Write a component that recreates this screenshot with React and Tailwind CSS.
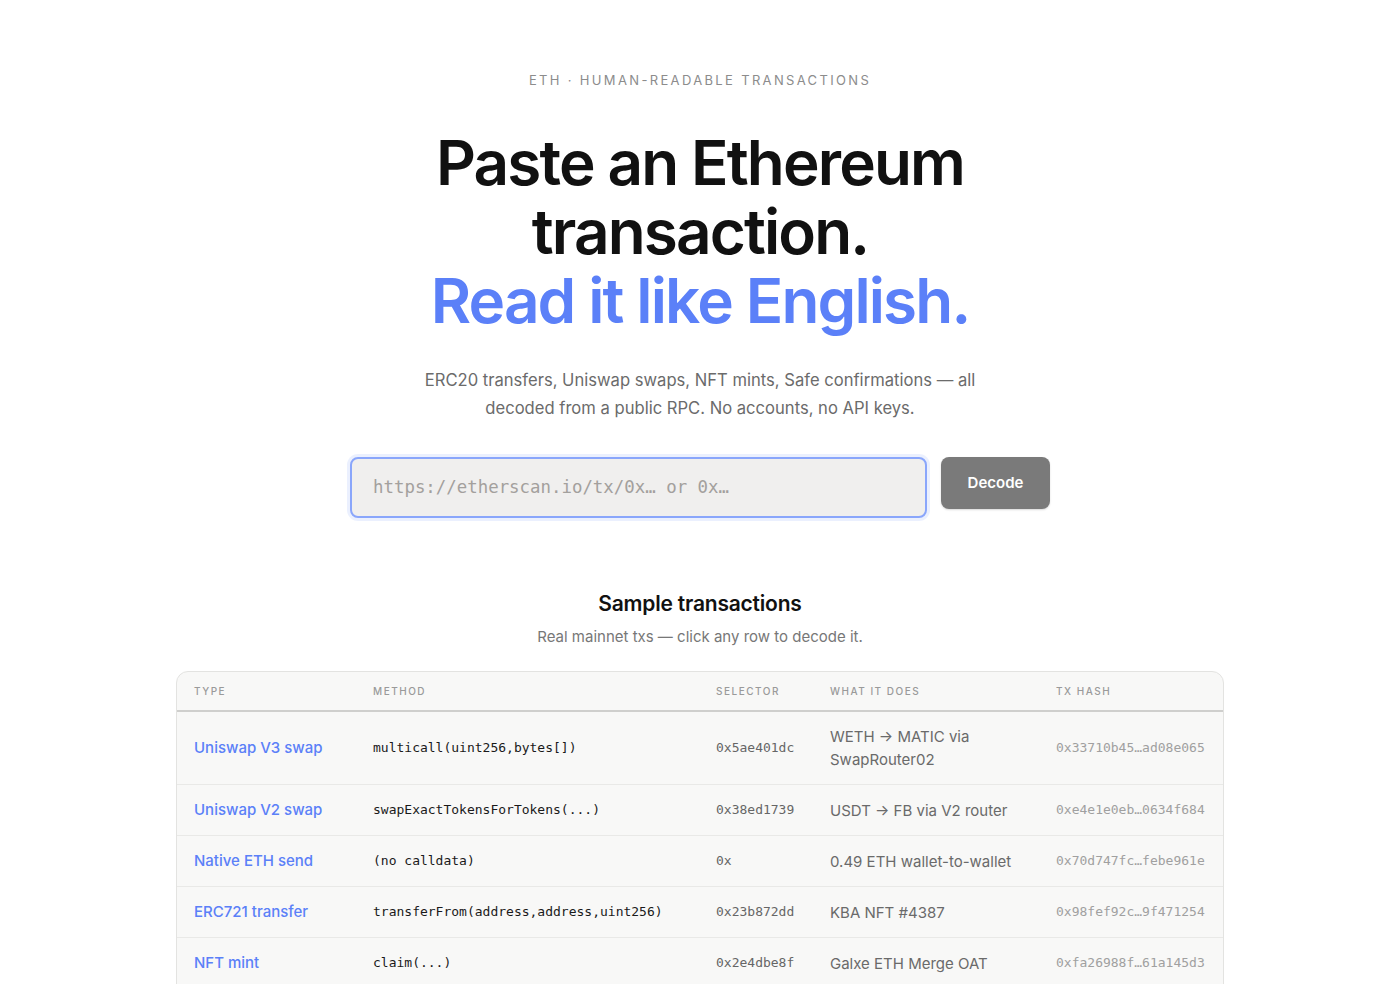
import React from "react";

const rows = [
  { type: "Uniswap V3 swap", method: "multicall(uint256,bytes[])", sel: "0x5ae401dc", what: "WETH → MATIC via SwapRouter02", hash: "0x33710b45…ad08e065" },
  { type: "Uniswap V2 swap", method: "swapExactTokensForTokens(...)", sel: "0x38ed1739", what: "USDT → FB via V2 router", hash: "0xe4e1e0eb…0634f684" },
  { type: "Native ETH send", method: "(no calldata)", sel: "0x", what: "0.49 ETH wallet-to-wallet", hash: "0x70d747fc…febe961e" },
  { type: "ERC721 transfer", method: "transferFrom(address,address,uint256)", sel: "0x23b872dd", what: "KBA NFT #4387", hash: "0x98fef92c…9f471254" },
  { type: "NFT mint", method: "claim(...)", sel: "0x2e4dbe8f", what: "Galxe ETH Merge OAT", hash: "0xfa26988f…61a145d3" },
];

const sans = { fontFamily: "Inter, 'Noto Sans', sans-serif" };
const mono = { fontFamily: "'DejaVu Sans Mono', monospace" };

export default function App() {
  return (
    <div className="min-h-[984px] bg-white flex flex-col items-center text-[#111]" style={sans}>
      <div className="pt-[70px] text-[13px] leading-[20px] tracking-[0.18em] text-[#8c8c8c] uppercase">
        ETH · Human-readable transactions
      </div>
      <h1 className="mt-[38px] flex flex-col items-center text-center text-[62px] font-semibold tracking-[-0.03em] text-[#111]">
        <span className="block leading-[69px]">Paste an Ethereum</span>
        <span className="block leading-[69px]">transaction.</span>
        <span className="block leading-[69px] text-[#5b80f8]">Read it like English.</span>
      </h1>
      <p className="mt-[31px] w-[570px] text-center text-[16.6px] leading-[28px] text-[#6b6b6b]">
        ERC20 transfers, Uniswap swaps, NFT mints, Safe confirmations — all decoded from a public RPC. No accounts, no API keys.
      </p>
      <div className="mt-[35px] flex items-start gap-[14px] w-[700px]">
        <div className="w-[577px] h-[61px] rounded-[8px] border-2 border-[#8aa6fb] bg-[#f0efee] shadow-[0_0_0_3px_rgba(91,128,248,0.12)] flex items-center px-[21px]">
          <span className="text-[17.4px] text-[#a3a09d]" style={mono}>
            https://etherscan.io/tx/0x… or 0x…
          </span>
        </div>
        <button className="w-[109px] h-[52px] rounded-[8px] bg-[#7a7a7a] text-white text-[15px] font-semibold shadow-[0_1px_2px_rgba(0,0,0,0.15)]">
          Decode
        </button>
      </div>
      <h2 className="mt-[72px] text-[21px] leading-[28px] font-semibold tracking-[-0.01em] text-[#111]">Sample transactions</h2>
      <p className="mt-[8px] text-[15px] leading-[22px] text-[#777]">Real mainnet txs — click any row to decode it.</p>
      <div className="mt-[23px] w-[1048px] rounded-t-[12px] border border-[#e3e3e1] bg-[#f8f8f7] overflow-hidden">
        <table className="w-full table-fixed border-collapse">
          <colgroup>
            <col className="w-[179px]" />
            <col className="w-[343px]" />
            <col className="w-[114px]" />
            <col className="w-[226px]" />
            <col />
          </colgroup>
          <thead>
            <tr className="border-b-2 border-[#cfcfcd] text-left">
              {["Type", "Method", "Selector", "What it does", "Tx hash"].map((h) => (
                <th key={h} className="h-[39px] px-[17px] text-[10px] font-medium uppercase tracking-[0.15em] text-[#9a9a9a]">
                  {h}
                </th>
              ))}
            </tr>
          </thead>
          <tbody>
            {rows.map((r) => (
              <tr key={r.type} className="border-b border-[#e9e9e7] cursor-pointer">
                <td className="px-[17px] py-[13px] text-[15px] leading-[24px] font-medium text-[#5b80f8]">{r.type}</td>
                <td className="px-[17px] py-[13px] text-[13px] leading-[24px] text-[#1a1a1a]" style={mono}>{r.method}</td>
                <td className="px-[17px] py-[13px] text-[13px] leading-[24px] text-[#666]" style={mono}>{r.sel}</td>
                <td className="px-[17px] py-[13px] text-[15px] leading-[23px] text-[#6a6a6a]">{r.what}</td>
                <td className="px-[17px] py-[13px] text-[13px] leading-[24px] text-[#a0a0a0]" style={mono}>{r.hash}</td>
              </tr>
            ))}
          </tbody>
        </table>
      </div>
    </div>
  );
}
